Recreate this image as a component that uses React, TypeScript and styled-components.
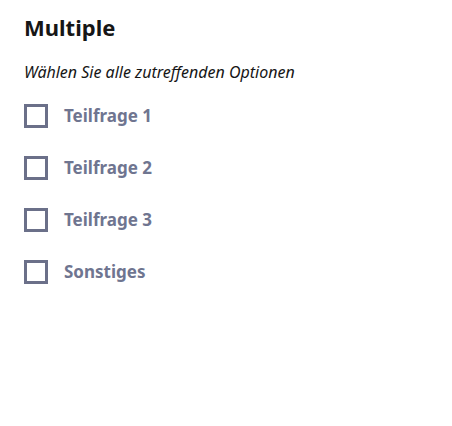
import React from 'react'
import styled, { createGlobalStyle } from 'styled-components'

const GlobalStyle = createGlobalStyle`
  body {
    margin: 0;
    background: #ffffff;
    font-family: 'Noto Sans', 'Open Sans', sans-serif;
  }
`

const Wrapper = styled.div`
  padding: 12px 24px;
`

const Title = styled.h2`
  margin: 0;
  font-size: 22px;
  font-weight: 700;
  color: #161616;
  line-height: 30px;
`

const Hint = styled.p`
  margin: 20px 0 22px;
  font-size: 16px;
  font-style: italic;
  color: #161616;
  line-height: 20px;
`

const Options = styled.div`
  display: flex;
  flex-direction: column;
  gap: 28px;
`

const Row = styled.label`
  display: flex;
  align-items: center;
  gap: 16px;
  cursor: pointer;
`

const Box = styled.span`
  box-sizing: border-box;
  width: 24px;
  height: 24px;
  border: 3px solid #6b7089;
  flex-shrink: 0;
`

const Label = styled.span`
  font-size: 17px;
  font-weight: 700;
  color: #6f7590;
  line-height: 24px;
`

const options = ['Teilfrage 1', 'Teilfrage 2', 'Teilfrage 3', 'Sonstiges']

export default function App() {
  return (
    <>
      <GlobalStyle />
      <Wrapper>
        <Title>Multiple</Title>
        <Hint>Wählen Sie alle zutreffenden Optionen</Hint>
        <Options>
          {options.map(o => (
            <Row key={o}>
              <Box />
              <Label>{o}</Label>
            </Row>
          ))}
        </Options>
      </Wrapper>
    </>
  )
}
